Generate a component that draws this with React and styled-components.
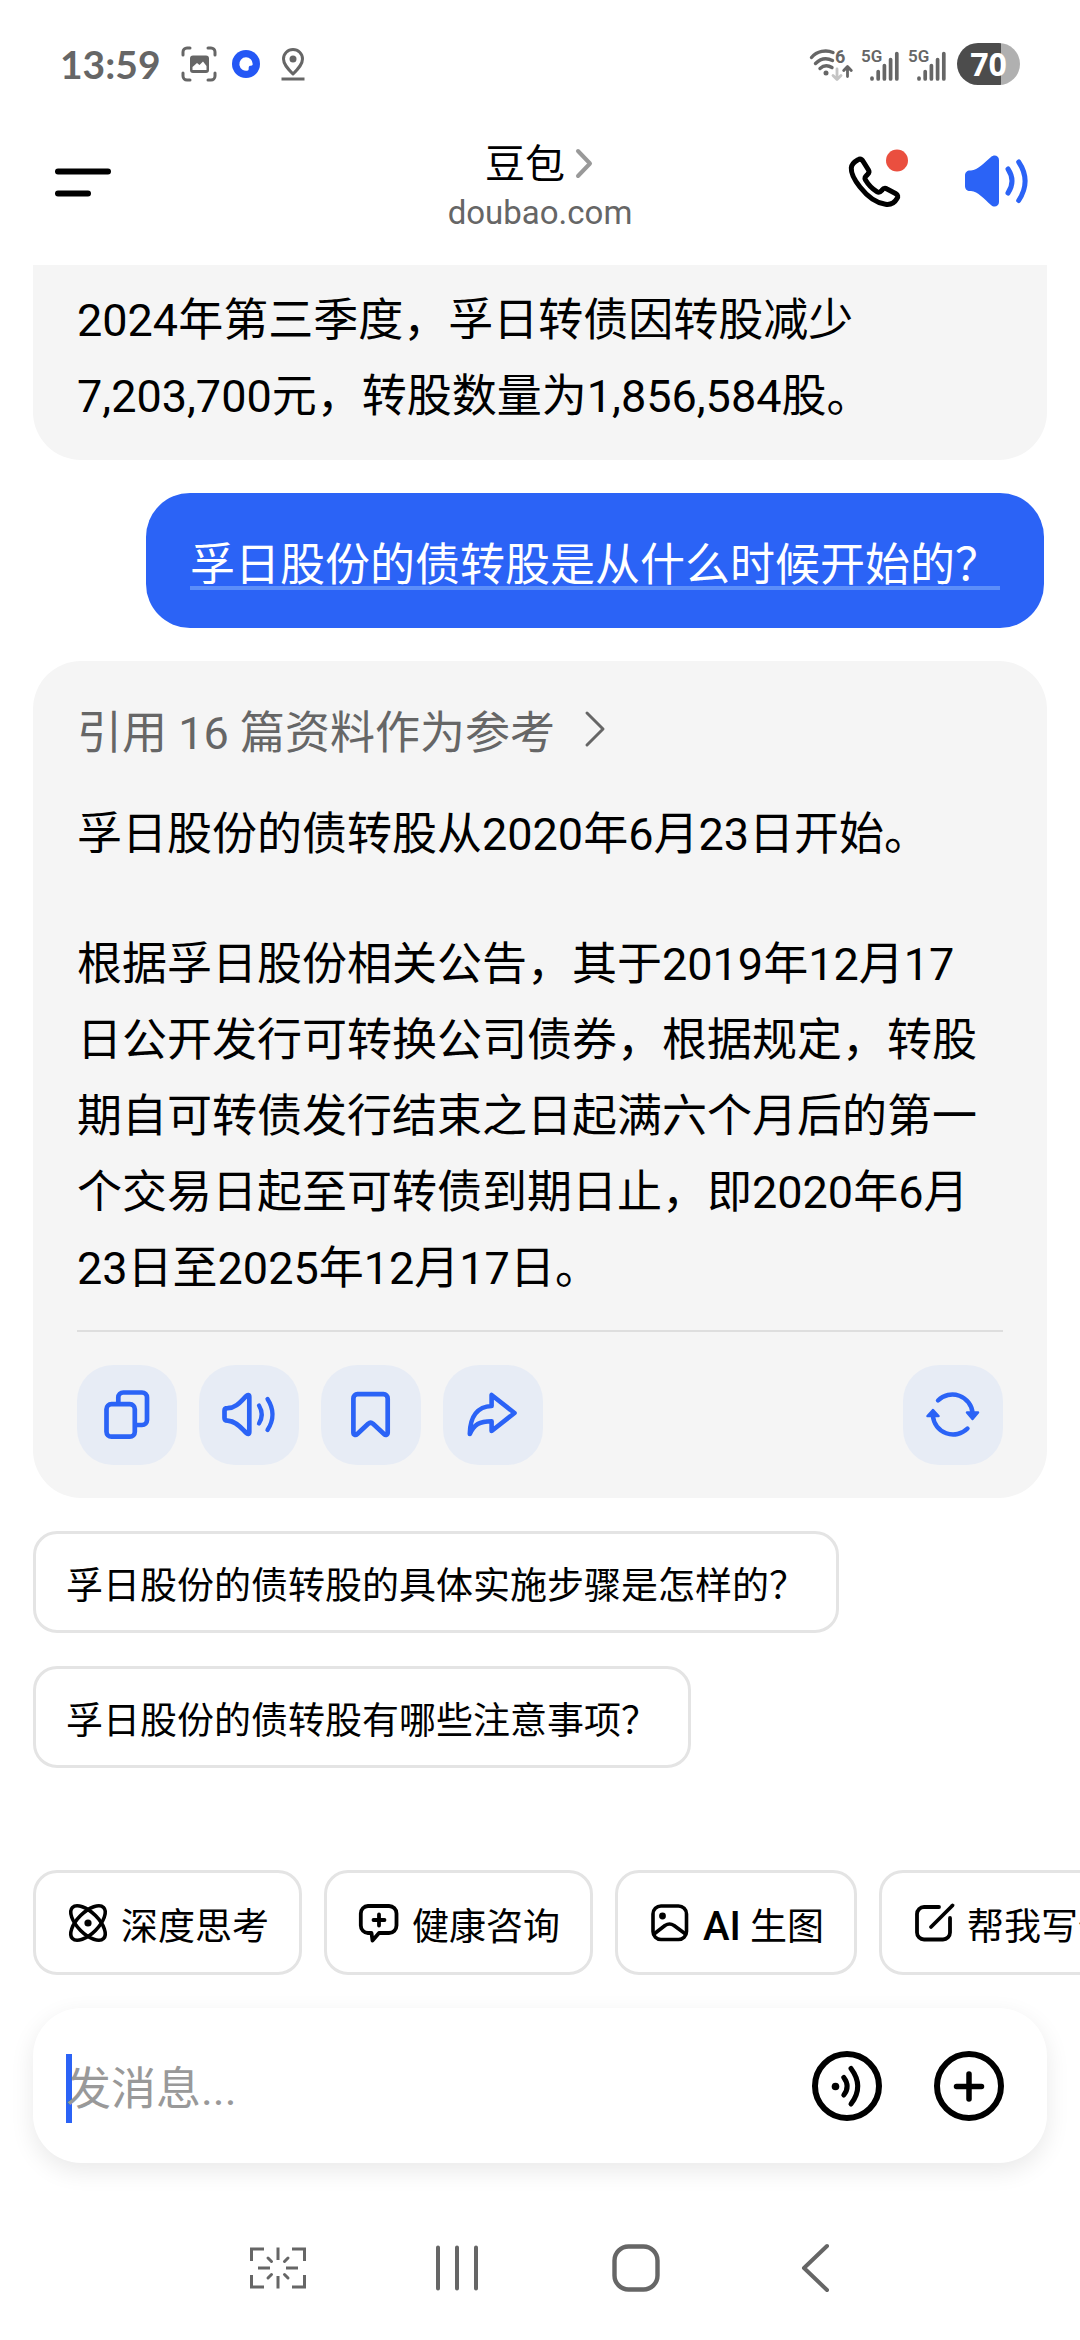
import React from "react";
import styled, { createGlobalStyle } from "styled-components";

const BLUE = "#2b63f6";
const GREY = "#666666";

const GlobalStyle = createGlobalStyle`
  *, *::before, *::after { box-sizing: border-box; }
  body {
    margin: 0;
    background: #ffffff;
    color: #000000;
    font-family: Roboto, "Noto Sans CJK SC", sans-serif;
    overflow-x: hidden;
  }
  button, input { font: inherit; color: inherit; }
  svg { display: block; flex: none; overflow: visible; }
`;

const Screen = styled.div`
  display: flex;
  flex-direction: column;
  min-height: 100vh;
`;

/* status bar */
const StatusBar = styled.div`
  display: flex;
  align-items: center;
  justify-content: space-between;
  height: 128px;
  padding: 0 60px;
  color: ${GREY};
`;
const StatusGroup = styled.div`
  display: flex;
  align-items: center;
  gap: ${(p) => p.$gap}px;
`;
const Clock = styled.time`
  font-family: Lato, sans-serif;
  font-size: 39px;
  font-weight: 700;
  line-height: 40px;
  margin-right: 8px;
`;
const Battery = styled.div`
  display: flex;
  align-items: center;
  justify-content: center;
  width: 63px;
  height: 42px;
  margin-left: 2px;
  border-radius: 21px;
  background: linear-gradient(90deg, #4c4c4c 70%, #b0b0b0 70%);
  color: #ffffff;
  font-family: "Open Sans", sans-serif;
  font-size: 32px;
  font-weight: 700;
  line-height: 42px;
`;

/* app header */
const Header = styled.header`
  display: grid;
  grid-template-columns: 1fr auto 1fr;
  align-items: center;
  height: 107px;
  margin-bottom: 30px;
  padding: 0 48px;
`;
const HeaderActions = styled.div`
  display: flex;
  justify-content: flex-end;
  gap: 50px;
`;
const IconButton = styled.button`
  width: ${(p) => p.$size}px;
  height: ${(p) => p.$size}px;
  padding: 0;
  border: 0;
  background: none;
`;
const TitleBlock = styled.div`
  display: flex;
  flex-direction: column;
  align-items: center;
  padding-top: 11px;
`;
const Title = styled.h1`
  display: flex;
  align-items: center;
  gap: 10px;
  margin: 0;
  font-size: 40px;
  font-weight: 400;
  line-height: 52px;
`;
const Subtitle = styled.a`
  color: ${GREY};
  font-size: 33px;
  line-height: 44px;
  text-decoration: none;
`;

/* conversation */
const Chat = styled.main`
  display: flex;
  flex: 1;
  flex-direction: column;
  align-items: flex-start;
  gap: 33px;
  padding: 0 33px 33px;
`;
const Answer = styled.article`
  align-self: stretch;
  padding: ${(p) => (p.$continued ? "18px 44px 25px" : "35px 44px 33px")};
  border-radius: ${(p) => (p.$continued ? "0 0 48px 48px" : "48px")};
  background: #f5f5f5;
`;
const Paragraph = styled.p`
  margin: 0 0 ${(p) => p.$after || 0}px;
  padding-right: 6px;
  font-size: 45px;
  line-height: 76px;
`;
const Question = styled.p`
  align-self: flex-end;
  margin: 0 3px 0 0;
  padding: 35px 44px 24px;
  border-radius: 44px;
  background: ${BLUE};
  color: #ffffff;
  font-size: 45px;
  line-height: 76px;
  text-decoration: underline 4px #5c8ef9;
  text-underline-offset: 5px;
  text-decoration-skip-ink: none;
`;
const Sources = styled.button`
  display: flex;
  align-items: center;
  gap: 28px;
  margin-bottom: 25px;
  padding: 0;
  border: 0;
  background: none;
  color: ${GREY};
  font-size: 45px;
  line-height: 76px;
`;
const Divider = styled.hr`
  height: 2px;
  margin: 23px 0 33px;
  border: 0;
  background: #dedede;
`;
const Actions = styled.div`
  display: flex;
  gap: 22px;
`;
const ActionButton = styled.button`
  width: 100px;
  height: 100px;
  padding: 0;
  border: 0;
  border-radius: 36px;
  background: #e7ecf5;
  color: ${BLUE};
  margin-left: ${(p) => (p.$end ? "auto" : "0")};
`;
const Suggestion = styled.button`
  padding: 29px 30px 19px;
  border: 3px solid #e4e4e4;
  border-radius: 24px;
  background: #ffffff;
  font-size: 37px;
  line-height: 48px;
  text-align: left;
`;

/* shortcuts and composer */
const Shortcuts = styled.nav`
  display: flex;
  gap: 22px;
  padding: 0 33px;
  margin-bottom: 33px;
  overflow: hidden;
`;
const Chip = styled.button`
  display: flex;
  flex: none;
  align-items: center;
  gap: 11px;
  height: 105px;
  padding: 0 30px;
  border: 3px solid #e4e4e4;
  border-radius: 24px;
  background: #ffffff;
`;
const ChipLabel = styled.span`
  padding-top: 10px;
  font-size: 37px;
  line-height: 48px;
  white-space: nowrap;
  b { font-size: 40px; font-weight: 500; }
`;
const Composer = styled.form`
  display: flex;
  align-items: center;
  gap: 52px;
  height: 155px;
  margin: 0 33px 33px;
  padding: 0 43px 0 33px;
  border-radius: 48px;
  background: #ffffff;
  box-shadow: 0 8px 24px rgba(0, 0, 0, 0.09);
`;
const Field = styled.label`
  position: relative;
  display: flex;
  flex: 1;
  align-items: center;
  height: 100%;
`;
const Caret = styled.span`
  position: absolute;
  top: 46px;
  left: 0;
  width: 6px;
  height: 69px;
  background: ${BLUE};
`;
const MessageInput = styled.input`
  position: relative;
  width: 100%;
  height: 100%;
  padding: 8px 0 0;
  border: 0;
  outline: 0;
  background: none;
  font-size: 45px;
  &::placeholder { color: #999999; opacity: 1; }
`;

/* system navigation */
const SystemNav = styled.nav`
  display: grid;
  grid-template-columns: repeat(4, 1fr);
  justify-items: center;
  align-items: center;
  height: 144px;
  padding: 0 176px 0 188px;
  color: ${GREY};
`;
const KeyFace = styled.span`
  display: flex;
  align-items: center;
  justify-content: center;
  height: 100%;
`;

const Stroke = ({ w, h, sw, children, ...rest }) => (
  <svg
    width={w}
    height={h}
    viewBox={`0 0 ${w} ${h}`}
    fill="none"
    stroke="currentColor"
    strokeWidth={sw}
    strokeLinecap="round"
    strokeLinejoin="round"
    aria-hidden="true"
    {...rest}
  >
    {children}
  </svg>
);

const CaptureIcon = () => (
  <Stroke w={36} h={36} sw={3}>
    <path d="M2 9V6a4 4 0 0 1 4-4h3M27 2h3a4 4 0 0 1 4 4v3M34 27v3a4 4 0 0 1-4 4h-3M9 34H6a4 4 0 0 1-4-4v-3" />
    <path
      d="M12 9.500H25A3 3 0 0 1 28 12.500V24A3 3 0 0 1 25 27H12A3 3 0 0 1 9 24V12.500A3 3 0 0 1 12 9.500ZM11.500 24H25.500V20L22 15.500L18.500 19L16 17L11.500 21Z"
      fill="currentColor"
      fillRule="evenodd"
      stroke="none"
    />
  </Stroke>
);
const BubbleIcon = () => (
  <svg width="28" height="28" viewBox="0 0 28 28" aria-hidden="true">
    <circle cx="14" cy="14" r="14" fill="#2457f5" />
    <path d="M14 7.300a6.700 6.700 0 1 0 2 13.100c.9-.3.600-1.600.700-2.900.1-1.400 1-1.800 2.300-1.800 1.200 0 1.700-.4 1.700-1.700A6.700 6.700 0 0 0 14 7.300z" fill="#fff" />
  </svg>
);
const PinIcon = () => (
  <Stroke w={36} h={34} sw={3}>
    <path d="M18 27C12 21 8.500 17 8.500 12a9.500 9.500 0 0 1 19 0c0 5-3.500 9-9.500 15z" />
    <circle cx="18" cy="12" r="3.500" fill="currentColor" stroke="none" />
    <path d="M6.500 32h23" strokeLinecap="butt" />
  </Stroke>
);
const WifiIcon = () => (
  <Stroke w={44} h={36} sw={3.400}>
    <path d="M2.500 11.500C8 5 17 3.500 24 6.500M6.500 17.500c5-5 11-6 17-3M11 22.500c3.500-3.300 8-3.500 12-1" />
    <circle cx="17" cy="27" r="2.500" fill="currentColor" stroke="none" />
    <path d="M28 23v10M24 29.500l4 4 4-4" stroke="#c4c4c4" strokeWidth="2.800" />
    <path d="M38.500 30.500V21M34.700 24.500l3.800-4 3.800 4" strokeWidth="2.800" />
    <text x="26" y="17" fontSize="18" fontFamily="Roboto, sans-serif" fontWeight="700" fill="currentColor" stroke="none">6</text>
  </Stroke>
);
const SignalIcon = () => (
  <Stroke w={39} h={36} sw={3.700}>
    <text x="0" y="16" fontSize="17" fontFamily="Roboto, sans-serif" fontWeight="600" fill="currentColor" stroke="none">5G</text>
    <path d="M11 33v-1M17.200 33v-7.500M23.400 33V19.500M29.600 33V13.500M35.800 33V7.500" />
  </Stroke>
);

const MenuIcon = () => (
  <Stroke w={72} h={72} sw={6}>
    <path d="M10 25.500h50M10 47.500h30" />
  </Stroke>
);
const CallIcon = () => (
  <Stroke w={72} h={72} sw={5}>
    <path d="M20 13.800C22 12.600 24 13.500 25.500 16L30.500 24C31.500 25.600 31 27 29.500 28.500C27 31 26.300 31.500 27.500 34C30.500 39 34.500 43 38.800 45.600C41 47 42 46.500 43.800 44.400C45.500 42.200 46.800 41.700 49 43L57.500 47.500C60 49 60.300 50.800 59 52.500C56.500 57 52.500 59 47.500 58.300C38 57 29 50 22 41C16 33.500 13 27 13.300 22C13.500 18.500 17 15.500 20 13.800Z" />
    <circle cx="59" cy="14.500" r="11" fill="#ea4f3f" stroke="none" />
  </Stroke>
);
const SpeakerIcon = () => (
  <Stroke w={72} h={72} sw={5} color={BLUE}>
    <path
      d="M10 24.500H11C18 24 24 17 31 11C34 8 39 9.500 39 14V56C39 60.500 34 62 31 59C24 53 18 45.500 11 45H10C7 45 5 43 5 40V29.500C5 26.500 7 24.500 10 24.500Z"
      fill="currentColor"
      stroke="none"
    />
    <path d="M48 23Q56 35 48 47M58.700 16Q71.500 35 58.700 54.500" />
  </Stroke>
);
const TitleChevron = () => (
  <Stroke w={20} h={34} sw={4} color="#999999">
    <path d="M3 3l12 12.500L3 28" />
  </Stroke>
);
const SourcesChevron = () => (
  <Stroke w={24} h={44} sw={3}>
    <path d="M4 1l16 16L4 33" />
  </Stroke>
);

const CopyIcon = () => (
  <Stroke w={100} h={100} sw={4.700}>
    <rect x="29.500" y="39.200" width="28.300" height="32.500" rx="5" />
    <path d="M41.300 37.500V32.500a5 5 0 0 1 5-5H65a5 5 0 0 1 5 5V55a5 5 0 0 1-5 5H60" strokeLinecap="butt" />
  </Stroke>
);
const ReadIcon = () => (
  <Stroke w={100} h={100} sw={4.700}>
    <path d="M28.500 43.200C37.500 43 42.500 35.500 47 31.300C48.700 29.500 50.300 29.800 50.300 32V67C50.300 69.200 48.700 69.500 47 67.700C42.500 63.500 37.500 56 28.500 55.600C26.500 55.600 25.500 54.600 25.500 53V45.800C25.500 44.200 26.500 43.200 28.500 43.200Z" />
    <path d="M60 40.500Q65.500 49.500 60 58.500M68.500 34Q78.500 49.500 68.500 65" strokeWidth="4.300" />
  </Stroke>
);
const SaveIcon = () => (
  <Stroke w={100} h={100} sw={4.700}>
    <path d="M36.500 29.200H62.500a4.200 4.200 0 0 1 4.200 4.200V67.500C66.700 70 64.700 70.700 63 69L52 58.800Q49.600 56.800 47.200 58.800L36.300 69C34.500 70.700 32.400 70 32.400 67.500V33.400a4.200 4.200 0 0 1 4.100-4.200Z" />
  </Stroke>
);
const ShareIcon = () => (
  <Stroke w={100} h={100} sw={4.600}>
    <path d="M48.600 30V41C35 41.500 27 51 26.800 69C31 59.500 36.500 56.200 48.600 56.200V66L71.500 48Z" />
  </Stroke>
);
const RefreshIcon = () => (
  <Stroke w={100} h={100} sw={4.400}>
    <path d="M35 35.500A20.300 20.300 0 0 1 69.600 48M64.500 63.500A20.300 20.300 0 0 1 29.900 51" />
    <path d="M64 47.500H75L69.500 54ZM24.500 51H35.500L30 45Z" fill="currentColor" strokeWidth="2.500" />
  </Stroke>
);

const AtomIcon = () => (
  <Stroke w={44} h={44} sw={3.600}>
    <ellipse cx="22" cy="22" rx="22" ry="10.500" transform="rotate(45 22 22)" />
    <ellipse cx="22" cy="22" rx="22" ry="10.500" transform="rotate(-45 22 22)" />
    <circle cx="22" cy="22" r="3.600" fill="currentColor" stroke="none" />
  </Stroke>
);
const HealthIcon = () => (
  <Stroke w={44} h={44} sw={3.800}>
    <path d="M11 5H32a7.500 7.500 0 0 1 7.500 7.500V24.500A7.500 7.500 0 0 1 32 32H22L15.500 39.500L14.500 32H11A7.500 7.500 0 0 1 3.800 24.500V12.500A7.500 7.500 0 0 1 11 5Z" />
    <path d="M22 13.500v11M16.500 19h11" />
  </Stroke>
);
const PictureIcon = () => (
  <Stroke w={44} h={44} sw={3.600}>
    <rect x="5" y="5" width="33.500" height="33.500" rx="8" />
    <circle cx="14.500" cy="15" r="3.400" fill="currentColor" stroke="none" />
    <path d="M6 33L17 24.500Q21.500 21.500 26 24.500L37.500 33" />
  </Stroke>
);
const WriteIcon = () => (
  <Stroke w={44} h={44} sw={3.800}>
    <path d="M27 6H12A7 7 0 0 0 5 13V31.500A7 7 0 0 0 12 38.500H31A7 7 0 0 0 38 31.500V17" />
    <path d="M19 26L40.500 4.500" />
  </Stroke>
);

const VoiceIcon = () => (
  <Stroke w={70} h={70} sw={5}>
    <circle cx="35" cy="35" r="32" strokeWidth="6" />
    <circle cx="23.500" cy="35.500" r="3.800" fill="currentColor" stroke="none" />
    <path d="M31.800 26.500Q38.500 35.500 31.800 44M39 17.500Q52.500 35.500 39 53" />
  </Stroke>
);
const PlusIcon = () => (
  <Stroke w={70} h={70} sw={5.500}>
    <circle cx="35" cy="35" r="32" strokeWidth="6" />
    <path d="M35 23v25M22.500 35.500h25" />
  </Stroke>
);

const ScanIcon = () => (
  <Stroke w={58} h={46} sw={3} strokeLinecap="butt" strokeLinejoin="miter">
    <path d="M2.500 16V4H15M43 4H55.500V16M55.500 30V42H43M15 42H2.500V30" />
    <path d="M29 2.500V15M29 31V43.500M9 23H21M37 23H49" />
    <path d="M19 13L22.500 16.500M39 13L35.500 16.500M19 33L22.500 29.500M39 33L35.500 29.500" strokeLinecap="round" />
  </Stroke>
);
const RecentsIcon = () => (
  <Stroke w={50} h={50} sw={4}>
    <path d="M6 4.500v41M25 4.500v41M44 4.500v41" />
  </Stroke>
);
const HomeIcon = () => (
  <Stroke w={50} h={50} sw={4.400}>
    <rect x="3.500" y="3.500" width="43" height="43" rx="14" />
  </Stroke>
);
const BackIcon = () => (
  <Stroke w={50} h={50} sw={4}>
    <path d="M37 3L14 25L37 47" />
  </Stroke>
);

const actions = [
  ["复制", CopyIcon],
  ["朗读", ReadIcon],
  ["收藏", SaveIcon],
  ["分享", ShareIcon],
];
const suggestions = [
  "孚日股份的债转股的具体实施步骤是怎样的？",
  "孚日股份的债转股有哪些注意事项？",
];
const shortcuts = [
  [AtomIcon, "深度思考"],
  [HealthIcon, "健康咨询"],
  [PictureIcon, <><b>AI</b> 生图</>],
  [WriteIcon, "帮我写作"],
];
const systemKeys = [
  ["截屏", ScanIcon],
  ["最近任务", RecentsIcon],
  ["主页", HomeIcon],
  ["返回", BackIcon],
];

export default function App() {
  return (
    <Screen>
      <GlobalStyle />
      <StatusBar>
        <StatusGroup $gap={12}>
          <Clock>13:59</Clock>
          <StatusGroup $gap={15}>
            <CaptureIcon />
            <BubbleIcon />
            <PinIcon />
          </StatusGroup>
        </StatusGroup>
        <StatusGroup $gap={8}>
          <WifiIcon />
          <SignalIcon />
          <SignalIcon />
          <Battery>70</Battery>
        </StatusGroup>
      </StatusBar>

      <Header>
        <IconButton $size={72} aria-label="菜单"><MenuIcon /></IconButton>
        <TitleBlock>
          <Title>豆包<TitleChevron /></Title>
          <Subtitle href="#doubao">doubao.com</Subtitle>
        </TitleBlock>
        <HeaderActions>
          <IconButton $size={72} aria-label="通话"><CallIcon /></IconButton>
          <IconButton $size={72} aria-label="声音"><SpeakerIcon /></IconButton>
        </HeaderActions>
      </Header>

      <Chat>
        <Answer $continued>
          <Paragraph>2024年第三季度，孚日转债因转股减少7,203,700元，转股数量为1,856,584股。</Paragraph>
        </Answer>

        <Question>孚日股份的债转股是从什么时候开始的？</Question>

        <Answer>
          <Sources>引用 16 篇资料作为参考<SourcesChevron /></Sources>
          <Paragraph $after={54}>孚日股份的债转股从2020年6月23日开始。</Paragraph>
          <Paragraph>
            根据孚日股份相关公告，其于2019年12月17日公开发行可转换公司债券，根据规定，转股期自可转债发行结束之日起满六个月后的第一个交易日起至可转债到期日止，即2020年6月23日至2025年12月17日。
          </Paragraph>
          <Divider />
          <Actions>
            {actions.map(([label, Icon]) => (
              <ActionButton key={label} aria-label={label}><Icon /></ActionButton>
            ))}
            <ActionButton $end aria-label="重新生成"><RefreshIcon /></ActionButton>
          </Actions>
        </Answer>

        {suggestions.map((text) => (
          <Suggestion key={text}>{text}</Suggestion>
        ))}
      </Chat>

      <Shortcuts>
        {shortcuts.map(([Icon, label], i) => (
          <Chip key={i}>
            <Icon />
            <ChipLabel>{label}</ChipLabel>
          </Chip>
        ))}
      </Shortcuts>

      <Composer onSubmit={(e) => e.preventDefault()}>
        <Field>
          <Caret />
          <MessageInput type="text" placeholder="发消息..." aria-label="发消息" />
        </Field>
        <IconButton type="button" $size={70} aria-label="语音"><VoiceIcon /></IconButton>
        <IconButton type="button" $size={70} aria-label="更多"><PlusIcon /></IconButton>
      </Composer>

      <SystemNav>
        {systemKeys.map(([label, Icon]) => (
          <IconButton key={label} $size={58} aria-label={label}>
            <KeyFace><Icon /></KeyFace>
          </IconButton>
        ))}
      </SystemNav>
    </Screen>
  );
}
